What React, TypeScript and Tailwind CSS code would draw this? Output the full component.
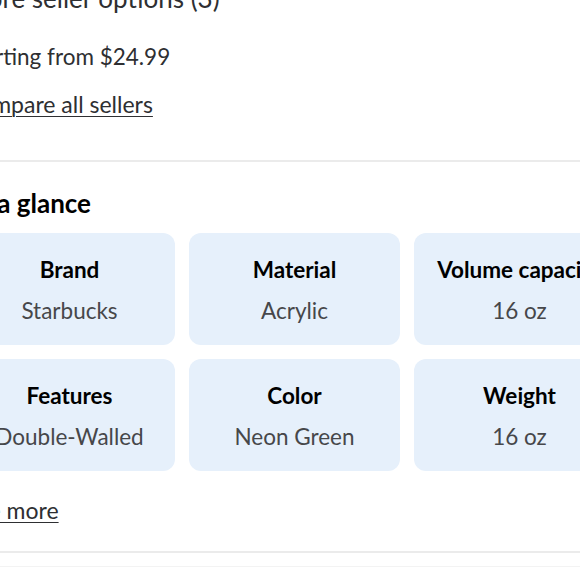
const specs = [
  { label: 'Brand', value: 'Starbucks' },
  { label: 'Material', value: 'Acrylic' },
  { label: 'Volume capacity', value: '16 oz' },
  { label: 'Features', value: 'Double-Walled' },
  { label: 'Color', value: 'Neon Green' },
  { label: 'Weight', value: '16 oz' },
];

export default function App() {
  return (
    <div className="w-[580px] h-[580px] overflow-hidden bg-white font-['Lato',sans-serif] text-[#2e2f32]">
      <div className="-ml-[36px] -mt-[18px] w-[680px]">
        {/* Sellers */}
        <div className="pb-[30px]">
          <h3 className="text-[26px] leading-[32px] text-[#2e2f32]">More seller options (3)</h3>
          <p className="mt-[28px] text-[22.5px] leading-[30px]">Starting from $24.99</p>
          <a className="mt-[18px] block text-[23px] leading-[28px] underline underline-offset-[3px] decoration-1">Compare all sellers</a>
        </div>
        <div className="h-[2px] w-full bg-[#ebebeb] mt-[12px]" />

        {/* At a glance */}
        <div className="pt-[26px]">
          <h2 className="text-[26px] leading-[30px] font-bold text-black">At a glance</h2>
          <div className="mt-[15px] grid grid-cols-[211px_211px_211px] gap-[14px]">
            {specs.map((s) => (
              <div key={s.label} className="h-[112px] rounded-[12px] bg-[#e6f0fb] flex flex-col items-center pt-[23px]">
                <div className="text-[22.5px] leading-[28px] font-bold text-black whitespace-nowrap">{s.label}</div>
                <div className="mt-[13px] text-[22.5px] leading-[28px] text-[#46474a] whitespace-nowrap">{s.value}</div>
              </div>
            ))}
          </div>
          <a className="mt-[25px] block text-[23px] leading-[28px] underline underline-offset-[3px] decoration-1 text-[#2e2f32]">See more</a>
        </div>
        <div className="mt-[27px] h-[2px] w-full bg-[#ebebeb]" />
        <div className="mt-[13px] h-px w-full bg-[#f3f3f3]" />
      </div>
    </div>
  );
}
